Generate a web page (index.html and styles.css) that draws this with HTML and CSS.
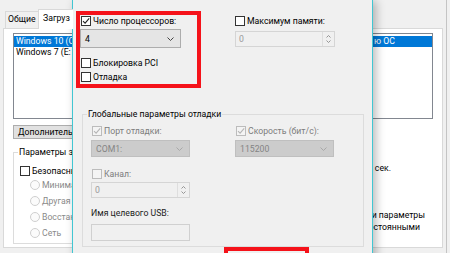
FILE: index.html
```html
<!DOCTYPE html>
<html lang="ru">
<head>
<meta charset="utf-8">
<link rel="stylesheet" href="styles.css">
</head>
<body>
<div class="screen">
  <div class="win">
    <div class="tabs">
      <div class="tab tab-general">Общие</div>
      <div class="tab active">Загруз</div>
    </div>
    <div class="panel">
      <div class="oslist">
        <div class="item sel"><span class="item-start">Windows 10 (C</span><span class="item-end">ю ОС</span></div>
        <div class="item"><span class="item-start">Windows 7 (E:</span></div>
      </div>
      <div class="btnrow"><div class="wbtn">Дополнитель</div></div>
      <div class="lower">
        <div class="group bootgroup">
          <div class="legend">Параметры з</div>
          <div class="crow boot-safe"><span class="cb"></span><span>Безопасны</span></div>
          <div class="rrow"><span class="rb"></span><span>Минима</span></div>
          <div class="rrow"><span class="rb"></span><span>Другая</span></div>
          <div class="rrow"><span class="rb"></span><span>Восстан</span></div>
          <div class="rrow"><span class="rb"></span><span>Сеть</span></div>
        </div>
        <div class="rightcol">
          <div class="timeout">сек.</div>
          <div class="persist l1">и параметры</div>
          <div class="persist l2">остоянными</div>
        </div>
      </div>
    </div>
  </div>

  <div class="dialog">
    <div class="topgrid">
      <div class="col">
        <div class="crow"><span class="cb"><svg viewBox="0 0 8 8"><path d="M1 4.1 L3.1 6.2 L7.2 1.4" fill="none" stroke="#222" stroke-width="1.1"/></svg></span><span>Число процессоров:</span></div>
        <div class="select cpu"><span>4</span><svg class="chev" viewBox="0 0 7 4"><path d="M0.5 0.5 L3.5 3.5 L6.5 0.5" fill="none" stroke="#444" stroke-width="1"/></svg></div>
        <div class="crow pci"><span class="cb"></span><span>Блокировка PCI</span></div>
        <div class="crow dbg"><span class="cb"></span><span>Отладка</span></div>
      </div>
      <div class="col">
        <div class="crow"><span class="cb"></span><span>Максимум памяти:</span></div>
        <div class="spin mem"><span class="val">0</span><span class="arrows"><svg viewBox="0 0 5 3"><path d="M0.5 2.5 L2.5 0.5 L4.5 2.5" fill="none" stroke="#8a8a8a" stroke-width="0.9"/></svg><svg viewBox="0 0 5 3"><path d="M0.5 0.5 L2.5 2.5 L4.5 0.5" fill="none" stroke="#8a8a8a" stroke-width="0.9"/></svg></span></div>
      </div>
    </div>

    <div class="group dbggroup">
      <div class="legend">Глобальные параметры отладки</div>
      <div class="dgrid">
        <div class="col">
          <div class="crow off"><span class="cb"><svg viewBox="0 0 8 8"><path d="M1 4.1 L3.1 6.2 L7.2 1.4" fill="none" stroke="#b5b5b5" stroke-width="1.1"/></svg></span><span>Порт отладки:</span></div>
          <div class="select off"><span>COM1:</span><svg class="chev" viewBox="0 0 7 4"><path d="M0.5 0.5 L3.5 3.5 L6.5 0.5" fill="none" stroke="#a8a8a8" stroke-width="1"/></svg></div>
          <div class="crow off chan"><span class="cb"></span><span>Канал:</span></div>
          <div class="spin chanbox"><span class="val">0</span><span class="arrows"><svg viewBox="0 0 5 3"><path d="M0.5 2.5 L2.5 0.5 L4.5 2.5" fill="none" stroke="#8a8a8a" stroke-width="0.9"/></svg><svg viewBox="0 0 5 3"><path d="M0.5 0.5 L2.5 2.5 L4.5 0.5" fill="none" stroke="#8a8a8a" stroke-width="0.9"/></svg></span></div>
          <div class="usblabel">Имя целевого USB:</div>
          <div class="tbx"></div>
        </div>
        <div class="col">
          <div class="crow off"><span class="cb"><svg viewBox="0 0 8 8"><path d="M1 4.1 L3.1 6.2 L7.2 1.4" fill="none" stroke="#b5b5b5" stroke-width="1.1"/></svg></span><span>Скорость (бит/с):</span></div>
          <div class="select off"><span>115200</span><svg class="chev" viewBox="0 0 7 4"><path d="M0.5 0.5 L3.5 3.5 L6.5 0.5" fill="none" stroke="#a8a8a8" stroke-width="1"/></svg></div>
        </div>
      </div>
    </div>
  </div>

  <div class="mark mark-top"></div>
  <div class="mark mark-bottom"></div>
</div>
</body>
</html>
```

FILE: styles.css
```css
* { box-sizing: border-box; }
html, body { margin: 0; padding: 0; }
body {
  width: 450px; height: 253px; overflow: hidden;
  background: #f0f0f0;
  font-family: Roboto, "Noto Sans", sans-serif;
  font-size: 8.7px; line-height: 12px; color: #000;
}
.screen { position: relative; width: 450px; height: 253px; overflow: hidden; }

/* background window (only the parts not covered by the dialog carry text) */
.win { width: 447px; height: 253px; padding-top: 9px; border-right: 1px solid #c4c4c4; background: #f0f0f0; }
.tabs { display: flex; align-items: flex-end; height: 19px; padding-left: 5px; }
.tab { height: 17px; padding: 0 2px; border: 1px solid #d9d9d9; border-bottom: none; background: #f0f0f0; line-height: 15px; margin-right: -1px; white-space: nowrap; }
.tab-general { width: 34px; }
.tab.active { width: 35px; height: 20px; padding-left: 4px; background: #fff; position: relative; z-index: 1; margin-bottom: -1px; line-height: 16px; border-right: none; }
.panel { margin-left: 3px; width: 440px; height: 220px; border: 1px solid #d9d9d9; background: #fff; padding: 4px 0 0 9px; }
.oslist { width: 420px; height: 86px; border: 1px solid #828790; padding-top: 2px; background: #fff; }
.item { display: flex; height: 11px; line-height: 11px; padding-left: 2px; white-space: nowrap; }
.item.sel { background: #0078d7; color: #fff; }
.item-end { margin-left: auto; margin-right: 37px; }
.btnrow { margin-top: 6px; }
.wbtn { width: 59px; height: 14px; border: 1px solid #adadad; border-right: none; background: #e1e1e1; padding-left: 4px; line-height: 12px; white-space: nowrap; }
.lower { display: flex; align-items: flex-start; margin-top: 13px; }
.group { border: 1px solid #dcdcdc; }
.legend { width: max-content; margin-top: -7px; margin-left: 4px; padding: 0 1px; white-space: nowrap; }
.bootgroup { width: 220px; height: 92px; }
.bootgroup .legend { background: #fff; }
.crow { display: flex; align-items: center; height: 12px; white-space: nowrap; }
.cb { width: 10px; height: 10px; border: 1px solid #333; background: #fff; margin-right: 2px; flex: none; display: flex; }
.cb svg { width: 8px; height: 8px; }
.boot-safe { margin-top: 7px; padding-left: 6px; }
.rrow { display: flex; align-items: center; height: 12px; margin-top: 4px; padding-left: 16px; color: #8a8a8a; white-space: nowrap; }
.boot-safe + .rrow { margin-top: 2px; }
.rb { width: 10px; height: 10px; border: 1px solid #cfcfcf; border-radius: 50%; background: #fbfbfb; margin-right: 2px; flex: none; }
.rightcol { flex: 1; display: flex; flex-direction: column; align-items: flex-end; white-space: nowrap; }
.timeout { height: 12px; margin-top: 10px; margin-right: 51px; }
.persist { height: 12px; }
.persist.l1 { margin-top: 35px; margin-right: 17px; }
.persist.l2 { margin-right: 22px; }

/* dialog */
.dialog {
  position: absolute; left: 72px; top: -1px; width: 301px; height: 275px;
  background: #f0f0f0; border: 1px solid #41c6d2;
  box-shadow: 3px 2px 9px rgba(0,0,0,0.28);
  padding: 15px 0 0 8px;
}
.topgrid { display: grid; grid-template-columns: 154px 1fr; }
.select { display: flex; align-items: center; justify-content: space-between; height: 19px; border: 1px solid #adadad; background: #e5e5e5; padding: 0 6px 0 4px; }
.chev { width: 7px; height: 4px; }
.cpu { width: 101px; margin-left: -1px; margin-top: 2px; }
.pci { margin-top: 9px; }
.dbg { margin-top: 2px; }
.spin { display: flex; align-items: stretch; height: 16px; border: 1px solid #d5d5d5; background: #f0f0f0; color: #9a9a9a; }
.spin .val { flex: 1; padding-left: 3px; line-height: 14px; }
.arrows { width: 12px; display: flex; flex-direction: column; align-items: center; justify-content: center; gap: 2px; border-left: 1px solid #dedede; }
.arrows svg { width: 5px; height: 3px; }
.mem { width: 100px; margin-top: 4px; }

.dbggroup { width: 282px; height: 133px; margin-top: 31px; margin-left: 1px; }
.dbggroup .legend { background: #f0f0f0; }
.dgrid { display: grid; grid-template-columns: 144px 1fr; padding-left: 8px; margin-top: 5px; }
.off { color: #7c7c7c; }
.crow.off { padding-left: 1px; }
.crow.off .cb { border-color: #bcbcbc; background: #f4f4f4; }
.select.off { width: 99px; height: 17px; margin-top: 3px; background: #cccccc; border-color: #bfbfbf; color: #848484; }
.chan { margin-top: 11px; }
.chanbox { width: 99px; margin-top: 2px; }
.usblabel { margin-top: 9px; height: 12px; white-space: nowrap; color: #222; }
.tbx { width: 99px; height: 17px; margin-top: 5px; border: 1px solid #d0d0d0; background: #f0f0f0; }

/* red annotation frames */
.mark { position: absolute; border: 4px solid #f5121a; }
.mark-top { left: 76px; top: 11px; width: 125px; height: 77px; }
.mark-bottom { left: 224px; top: 247px; width: 85px; height: 20px; }
```
